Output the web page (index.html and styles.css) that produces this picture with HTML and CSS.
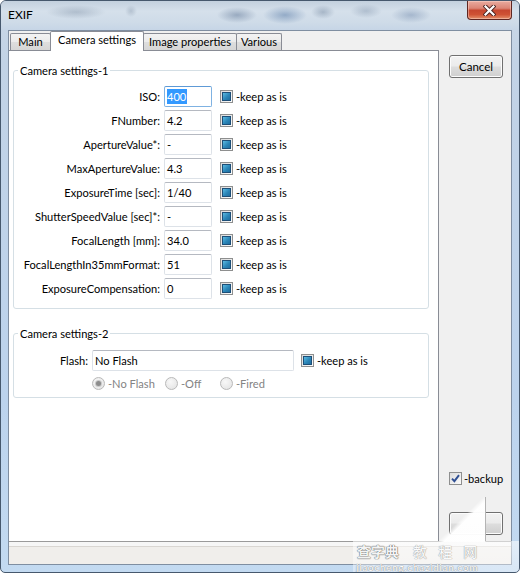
FILE: index.html
```html
<!DOCTYPE html>
<html lang="en">
<head>
<meta charset="utf-8">
<title>EXIF</title>
<link rel="stylesheet" href="styles.css">
</head>
<body>
<div class="window">
  <div class="titlebar">
    <span class="title">EXIF</span>
    <span class="close">
      <svg width="13" height="11" viewBox="0 0 13 11"><path d="M2.5 1.5 L10.5 9.5 M10.5 1.5 L2.5 9.5" stroke="#4a2320" stroke-width="4" stroke-linecap="square" fill="none"/><path d="M2.5 1.5 L10.5 9.5 M10.5 1.5 L2.5 9.5" stroke="#fff" stroke-width="2.2" stroke-linecap="square" fill="none"/></svg>
    </span>
  </div>
  <div class="client">
    <div class="content">
      <div class="tabcol">
        <div class="tabs">
          <div class="tab tab-main">Main</div>
          <div class="tab tab-cam active">Camera settings</div>
          <div class="tab tab-img">Image properties</div>
          <div class="tab tab-var">Various</div>
        </div>
        <div class="panel">
          <fieldset class="group g1">
            <legend>Camera settings-1</legend>
            <div class="rows">
              <div class="row"><span class="lbl">ISO:</span><span class="field focus"><span class="sel">400</span></span><span class="chk indet"></span><span class="keep">-keep as is</span></div>
              <div class="row"><span class="lbl">FNumber:</span><span class="field">4.2</span><span class="chk indet"></span><span class="keep">-keep as is</span></div>
              <div class="row"><span class="lbl">ApertureValue*:</span><span class="field">-</span><span class="chk indet"></span><span class="keep">-keep as is</span></div>
              <div class="row"><span class="lbl">MaxApertureValue:</span><span class="field">4.3</span><span class="chk indet"></span><span class="keep">-keep as is</span></div>
              <div class="row"><span class="lbl">ExposureTime [sec]:</span><span class="field">1/40</span><span class="chk indet"></span><span class="keep">-keep as is</span></div>
              <div class="row"><span class="lbl">ShutterSpeedValue [sec]*:</span><span class="field">-</span><span class="chk indet"></span><span class="keep">-keep as is</span></div>
              <div class="row"><span class="lbl">FocalLength [mm]:</span><span class="field">34.0</span><span class="chk indet"></span><span class="keep">-keep as is</span></div>
              <div class="row"><span class="lbl">FocalLengthIn35mmFormat:</span><span class="field">51</span><span class="chk indet"></span><span class="keep">-keep as is</span></div>
              <div class="row"><span class="lbl">ExposureCompensation:</span><span class="field">0</span><span class="chk indet"></span><span class="keep">-keep as is</span></div>
            </div>
          </fieldset>
          <fieldset class="group g2">
            <legend>Camera settings-2</legend>
            <div class="row flash"><span class="lbl lbl-flash">Flash:</span><span class="field wide">No Flash</span><span class="chk indet chk-flash"></span><span class="keep">-keep as is</span></div>
            <div class="radios">
              <span class="ritem r1"><span class="radio on"></span><span class="rlbl">-No Flash</span></span>
              <span class="ritem r2"><span class="radio"></span><span class="rlbl">-Off</span></span>
              <span class="ritem"><span class="radio"></span><span class="rlbl">-Fired</span></span>
            </div>
          </fieldset>
        </div>
      </div>
      <div class="side">
        <span class="btn cancel">Cancel</span>
        <div class="backup"><span class="chk checked"><svg width="9" height="9" viewBox="0 0 9 9"><path d="M1 4.6 L3.4 7.2 L8 1.2" stroke="#2f4f93" stroke-width="1.9" fill="none"/></svg></span><span class="keep">-backup</span></div>
        <span class="btn ok"></span>
      </div>
    </div>
    <div class="status"></div>
  </div>
  <div class="wm-shape"></div>
  <div class="watermark">
    <div class="wm-line1"><span class="wm-a">查字典</span><span class="wm-b">教 程 网</span></div>
    <div class="wm-line2">jiaocheng.chazidian.com</div>
  </div>
</div>
</body>
</html>
```

FILE: styles.css
```css
* { box-sizing: border-box; }
html, body { margin: 0; padding: 0; background: #fff; }
body { font-family: Lato, "Noto Sans", sans-serif; font-size: 11.1px; line-height: 15px; color: #000; }

.window {
  position: relative;
  width: 520px; height: 573px;
  border: 1px solid #46586d;
  border-radius: 6px 6px 5px 5px;
  padding: 0 7px 7px;
  display: flex; flex-direction: column;
  overflow: hidden;
  background: linear-gradient(#cbd8e6, #c2d3e6 60px, #bcd3ed 70%, #c3daf1);
}

.titlebar {
  height: 29px;
  margin: 0 -7px;
  padding-left: 7px;
  display: flex; align-items: flex-start;
  background:
    radial-gradient(ellipse 30px 7px at 75px 11px, rgba(120,138,160,.40), transparent),
    radial-gradient(ellipse 6px 6px at 130px 10px, rgba(120,138,160,.35), transparent),
    radial-gradient(ellipse 20px 8px at 236px 14px, rgba(95,118,150,.50), transparent),
    radial-gradient(ellipse 22px 9px at 284px 14px, rgba(95,128,170,.55), transparent),
    radial-gradient(ellipse 12px 7px at 322px 11px, rgba(110,130,155,.45), transparent),
    radial-gradient(ellipse 16px 7px at 365px 10px, rgba(120,140,165,.40), transparent),
    radial-gradient(ellipse 20px 8px at 410px 14px, rgba(110,135,170,.45), transparent),
    linear-gradient(#c3d0de, #d5e0eb 35%, #cedbe8 75%, #c6d5e6);
}
.title { margin-top: 6px; font-size: 12px; color: #000; }
.close {
  margin-left: auto; margin-right: 7px;
  width: 45px; height: 19px;
  border: 1px solid #5e2621; border-top: none;
  border-radius: 0 0 4px 4px;
  background: linear-gradient(#e9ab9f, #db8576 40%, #c7472f 52%, #cf5234 75%, #e4906a);
  box-shadow: inset 0 0 0 1px rgba(255,220,210,.45);
  display: flex; align-items: center; justify-content: center;
}

.client {
  flex: 1;
  display: flex; flex-direction: column;
  background: #f0f0f0;
  border: 1px solid #7f8ea1;
  min-height: 0;
}
.content { flex: 1; display: flex; min-height: 0; }
.tabcol { width: 430px; display: flex; flex-direction: column; }

.tabs {
  height: 20px;
  margin-bottom: -1px;
  padding-left: 1px;
  display: flex; align-items: flex-end;
  position: relative; z-index: 1;
}
.tab {
  height: 17px;
  margin-bottom: 1px;
  margin-left: -1px;
  border: 1px solid #898c95; border-bottom: none;
  border-radius: 2px 2px 0 0;
  background: linear-gradient(#f3f3f3, #ebebeb 50%, #dedede 51%, #d6d6d6);
  text-align: center;
  line-height: 16px;
  white-space: nowrap;
}
.tab-main { margin-left: 0; width: 41px; }
.tab-cam { width: 94px; }
.tab-img { width: 94px; }
.tab-var { width: 46px; }
.tab.active {
  height: 20px; margin-bottom: 0;
  background: #fff;
  line-height: 15px;
  position: relative; z-index: 2;
}

.panel {
  flex: 1;
  background: #fff;
  border-top: 1px solid #898c95;
  border-right: 1px solid #898c95;
  padding: 12px 9px 0 4px;
}

.group {
  margin: 0;
  border: 1px solid #d5dfe5;
  border-radius: 3px;
  padding: 8px 4px 9px;
  min-width: 0;
}
.group legend { padding: 0 2px; line-height: 15px; }
.g2 { margin-top: 17px; padding-top: 9px; padding-bottom: 7px; }

.rows { display: flex; flex-direction: column; gap: 3px; }
.row { display: flex; align-items: center; height: 21px; }
.lbl { width: 142px; text-align: right; white-space: nowrap; }
.lbl-flash { width: 70px; }

.field {
  margin-left: 4px;
  width: 48px; height: 21px;
  border: 1px solid #dde2e8; border-top-color: #b5b9c1;
  border-radius: 2px;
  padding-left: 2px;
  line-height: 19px;
  background: #fff;
  white-space: nowrap;
}
.field.wide { width: 202px; }
.field.focus { border-color: #7fb2e2; border-top-color: #5e9ad6; }
.sel { background: #3399ff; color: #fff; display: inline-block; line-height: 15px; padding: 0 1px 0 0; }

.chk {
  margin-left: 8px;
  width: 13px; height: 13px; flex: none;
  border: 1px solid #8e8f8f;
  background: linear-gradient(135deg, #dcdcdc, #fbfbfb);
  padding: 2px;
  display: inline-flex; align-items: center; justify-content: center;
}
.chk.indet::after {
  content: "";
  flex: none;
  width: 7px; height: 7px;
  border: 1px solid #1d4f78;
  background: linear-gradient(135deg, #5cbbe2, #2b86b8 55%, #1f6e9f);
}
.chk-flash { margin-left: 7px; }
.keep { margin-left: 3px; white-space: nowrap; }

.radios { display: flex; align-items: center; height: 13px; margin-top: 6px; padding-left: 74px; }
.ritem { display: flex; align-items: center; color: #838383; }
.r1 { width: 73px; }
.r2 { width: 55px; }
.radio {
  width: 13px; height: 13px; flex: none;
  border: 1px solid #b9b9b9; border-radius: 50%;
  background: radial-gradient(circle at 40% 35%, #f8f8f8, #e1e1e1);
  display: inline-flex; align-items: center; justify-content: center;
}
.radio.on::after {
  content: "";
  flex: none;
  width: 5px; height: 5px; border-radius: 50%;
  background: #8c8c8c;
  box-shadow: 0 0 0 1px #c9c9c9;
}
.rlbl { margin-left: 3px; white-space: nowrap; }

.side { flex: 1; display: flex; flex-direction: column; padding-left: 10px; }
.btn {
  width: 54px; height: 23px;
  border: 1px solid #707070;
  border-radius: 3px;
  background: linear-gradient(#f2f2f2, #ebebeb 48%, #dddddd 52%, #cfcfcf);
  box-shadow: inset 0 0 0 1px #fcfcfc;
  display: flex; align-items: center; justify-content: center;
}
.cancel { margin-top: 24px; font-size: 11.5px; }
.backup { margin-top: auto; display: flex; align-items: center; height: 13px; }
.backup .chk { margin-left: 0; padding: 1px; }
.backup .keep { margin-left: 2px; }
.ok { margin-top: 27px; margin-bottom: 6px; }

.status {
  height: 23px;
  border-top: 1px solid #9a9a9a;
  background: linear-gradient(#f6f6f6 0 4px, #d9d6d2 4px 5px, #f0eeeb 5px);
}

.wm-shape {
  position: absolute;
  left: 438px; top: 496px;
  width: 47px; height: 45px;
  border-right: 1px solid #b4b4b4;
  background: linear-gradient(to bottom right, rgba(255,255,255,0) 48%, rgba(255,255,255,.97) 55%);
}
.watermark {
  position: absolute;
  left: 352px; top: 540px;
  width: 167px; height: 32px;
  background: linear-gradient(rgba(255,255,255,.55), rgba(255,255,255,.35));
  font-family: "Noto Sans CJK SC", sans-serif;
  color: #fff;
  overflow: hidden;
}
.wm-line1 { display: flex; align-items: flex-start; height: 21px; padding-left: 4px; }
.wm-a { font-size: 14px; font-weight: bold; line-height: 20px; color: #f4f4f4; text-shadow: 0 0 1px #555, 0 0 1px #555; }
.wm-b { margin-left: 14px; font-size: 14px; line-height: 20px; letter-spacing: 4px; color: #fafafa; text-shadow: 0 0 1px #9a9a9a, 0 0 1px #9a9a9a; }
.wm-line2 { font-family: Lato, sans-serif; font-size: 10px; line-height: 11px; padding-left: 3px; letter-spacing: 0.7px; color: #fff; text-shadow: 0 0 1px #8a8a8a, 0 0 1px #8a8a8a; }
```
